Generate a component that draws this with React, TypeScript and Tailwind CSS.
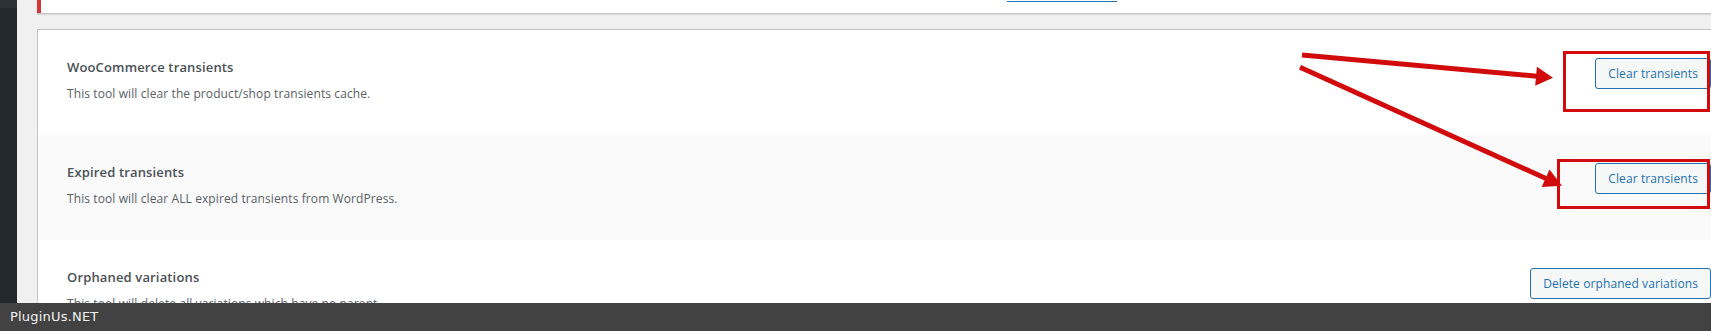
import React from "react";

const font = { fontFamily: '"Open Sans", "Noto Sans", Arial, sans-serif' };

type RowProps = {
  title: string;
  desc: string;
  button: string;
  alt?: boolean;
};

function ToolRow({ title, desc, button, alt }: RowProps) {
  return (
    <div
      className={
        alt
          ? "flex justify-between h-[105px] pl-[29px] pr-[20px] bg-[#fafafa]"
          : "flex justify-between h-[105px] pl-[29px] pr-[20px] bg-white"
      }
    >
      <div className="pt-[27px]">
        <div className="text-[13px] leading-[20px] font-semibold text-[#4a5056] tracking-[0.15px]">
          {title}
        </div>
        <div className="mt-[7px] text-[12px] leading-[20px] text-[#585e64] tracking-[0.1px]">
          {desc}
        </div>
      </div>
      <div className="pt-[28px]">
        <button className="h-[31px] px-[12px] rounded-[3px] border border-[#2271b1] bg-[#f6f7f7] text-[#2271b1] text-[12px] leading-[29px] tracking-[0.1px] whitespace-nowrap">
          {button}
        </button>
      </div>
    </div>
  );
}

export default function App() {
  return (
    <div className="relative w-full h-[331px] overflow-hidden flex flex-col" style={font}>
      <div className="flex h-[303px] shrink-0 overflow-hidden">
        <div className="w-[17px] shrink-0 flex flex-col bg-[#23282d]">
          <div className="h-[8px] bg-[#2c3338]" />
        </div>
        <div className="flex-1 min-w-0 bg-[#f0f0f1] pl-[20px] overflow-hidden">
          <div className="w-[1694px] h-[14px] flex bg-white border-b border-[#c3c4c7] shadow-[0_1px_1px_rgba(0,0,0,0.08)]">
            <div className="w-[4px] bg-[#d63638]" />
            <div className="ml-[966px] mt-[1px] h-px w-[110px] bg-[#2271b1]" />
          </div>
          <div className="mt-[15px] w-[1694px] shrink-0 border-t border-l border-[#c3c4c7] bg-white">
            <ToolRow
              title="WooCommerce transients"
              desc="This tool will clear the product/shop transients cache."
              button="Clear transients"
            />
            <ToolRow
              alt
              title="Expired transients"
              desc="This tool will clear ALL expired transients from WordPress."
              button="Clear transients"
            />
            <ToolRow
              title="Orphaned variations"
              desc="This tool will delete all variations which have no parent."
              button="Delete orphaned variations"
            />
          </div>
        </div>
      </div>
      <div className="h-[28px] shrink-0 bg-[#424242] flex items-center pl-[10px]">
        <span
          className="text-[13px] text-[#f2f2f2] tracking-[0.2px]"
          style={{ fontFamily: '"DejaVu Sans", Verdana, sans-serif' }}
        >
          PluginUs.NET
        </span>
      </div>
      <svg
        className="absolute inset-0 pointer-events-none"
        width="1711"
        height="331"
        viewBox="0 0 1711 331"
      >
        <rect x="1564.5" y="52.5" width="144" height="58" fill="none" stroke="#d10b0b" strokeWidth="3" />
        <rect x="1558.5" y="160.5" width="150" height="47" fill="none" stroke="#d10b0b" strokeWidth="3" />
        <line x1="1302" y1="55" x2="1537" y2="76.2" stroke="#d10b0b" strokeWidth="5" />
        <polygon points="1553,77.7 1535.2,85.7 1536.9,66.7" fill="#d10b0b" />
        <line x1="1300" y1="67.3" x2="1546" y2="178.5" stroke="#d10b0b" strokeWidth="5" />
        <polygon points="1562,185.7 1541.7,187 1549.5,169.6" fill="#d10b0b" />
      </svg>
    </div>
  );
}
